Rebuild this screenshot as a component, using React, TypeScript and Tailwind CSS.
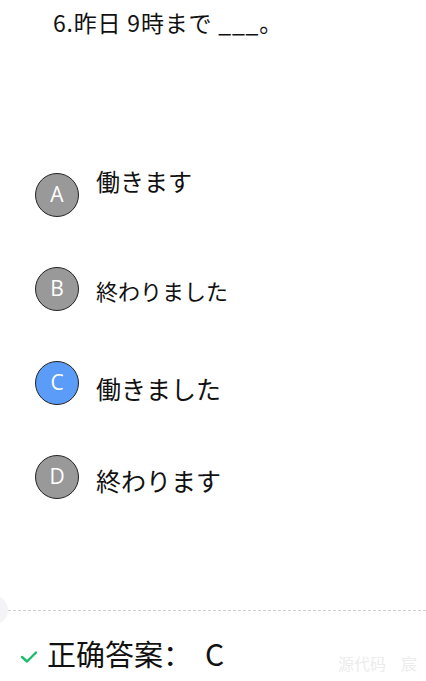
import React from 'react'

const jp = { fontFamily: '"Noto Sans CJK JP", "Noto Sans", sans-serif' }

type Option = {
  key: string
  text: string
  active?: boolean
  textClass: string
}

const options: Option[] = [
  { key: 'A', text: '働きます', textClass: 'text-[24px] mb-[28px]' },
  { key: 'B', text: '終わりました', textClass: 'text-[22px] mt-[2px]' },
  { key: 'C', text: '働きました', active: true, textClass: 'text-[25px] mt-[10px]' },
  { key: 'D', text: '終わります', textClass: 'text-[25px] mt-[6px]' },
]

const App: React.FC = () => {
  return (
    <div
      className="relative h-[681px] w-[426px] overflow-hidden bg-white text-[#111]"
      style={jp}
    >
      {/* Question */}
      <p className="pl-[53px] pt-[7px] text-[23px] leading-[30px] tracking-[0.8px]">6.昨日 9時まで ___。</p>

      {/* Options */}
      <div className="mt-[136px] flex flex-col gap-[50px] pl-[35px]">
        {options.map((o) => (
          <div key={o.key} className="flex h-[44px] items-center gap-[17px]">
            <div
              className={`flex h-[44px] w-[44px] shrink-0 items-center justify-center rounded-full border border-[#222] text-[21px] font-medium text-white ${
                o.active ? 'bg-[#5a9cf8]' : 'bg-[#999999]'
              }`}
              style={{ fontFamily: '"Open Sans", "Noto Sans", sans-serif' }}
            >
              {o.key}
            </div>
            <span className={`leading-none ${o.textClass}`}>{o.text}</span>
          </div>
        ))}
      </div>

      {/* Divider */}
      <div className="relative mt-[111px] flex items-center">
        <div className="absolute left-[-22px] top-[-15px] h-[30px] w-[30px] rounded-full bg-[#f4f4f6]" />
        <div className="ml-[8px] flex-1 border-t border-dashed border-[#cfcfcf]" />
      </div>

      {/* Answer */}
      <div
        className="mt-[24px] flex items-center pl-[20px]"
        style={{ fontFamily: '"Noto Sans CJK SC", "Noto Sans", sans-serif' }}
      >
        <svg width="18" height="12" viewBox="0 0 18 12" className="mt-[8px]">
          <polyline
            points="2,6 7,10.5 16,1.5"
            fill="none"
            stroke="#19be6b"
            strokeWidth="2.4"
            strokeLinecap="round"
            strokeLinejoin="round"
          />
        </svg>
        <span className="ml-[9px] text-[29px] leading-[36px]">正确答案：</span>
        <span className="ml-[13px] text-[30px] leading-[36px]">C</span>
      </div>

      {/* Watermark */}
      <div className="absolute bottom-[6px] right-[9px] flex gap-[15px] text-[16px] text-[#ececec]" style={{ fontFamily: '"Noto Sans CJK SC", sans-serif' }}>
        <span>源代码</span>
        <span>宸</span>
      </div>
    </div>
  )
}

export default App
